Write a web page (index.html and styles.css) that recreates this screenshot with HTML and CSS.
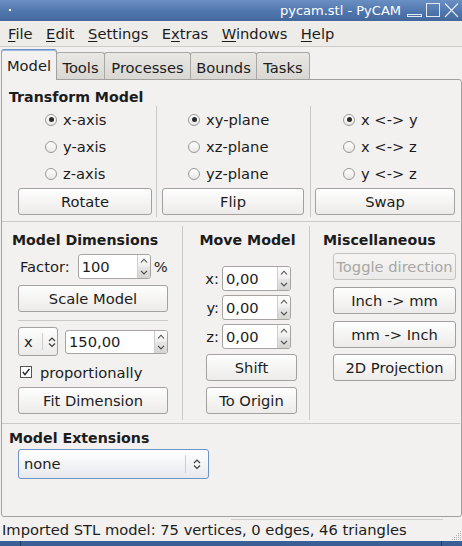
FILE: index.html
```html
<!DOCTYPE html>
<html>
<head>
<meta charset="utf-8">
<title>pycam.stl - PyCAM</title>
<link rel="stylesheet" href="styles.css">
</head>
<body>
<div class="titlebar">
  <span class="app-dot"></span>
  <span class="title">pycam.stl - PyCAM</span>
  <svg class="wbtns" width="56" height="21" viewBox="0 0 56 21">
    <rect x="1.5" y="14.5" width="14" height="2" fill="none" stroke="#e3e9f2"/>
    <rect x="20.5" y="3.5" width="13" height="13" fill="none" stroke="#e3e9f2"/>
    <path d="M39 3.5 L52 17 M52 3.5 L39 17" stroke="#e3e9f2" stroke-width="1.1" fill="none"/>
  </svg>
</div>
<div class="menubar">
  <span class="menu"><u>F</u>ile</span>
  <span class="menu"><u>E</u>dit</span>
  <span class="menu"><u>S</u>ettings</span>
  <span class="menu">E<u>x</u>tras</span>
  <span class="menu"><u>W</u>indows</span>
  <span class="menu"><u>H</u>elp</span>
</div>
<div class="notebook">
  <div class="tabs">
    <div class="tab active t-model">Model</div>
    <div class="tab t-tools">Tools</div>
    <div class="tab t-proc">Processes</div>
    <div class="tab t-bounds">Bounds</div>
    <div class="tab t-tasks">Tasks</div>
  </div>
  <div class="page">
    <section class="transform">
      <div class="ftitle">Transform Model</div>
      <div class="tgrid">
        <div class="tcol tc1">
          <div class="radios">
            <div class="radio"><span class="rb on"></span>x-axis</div>
            <div class="radio"><span class="rb"></span>y-axis</div>
            <div class="radio"><span class="rb"></span>z-axis</div>
          </div>
          <div class="btn">Rotate</div>
        </div>
        <div class="vsep"></div>
        <div class="tcol tc2">
          <div class="radios">
            <div class="radio"><span class="rb on"></span>xy-plane</div>
            <div class="radio"><span class="rb"></span>xz-plane</div>
            <div class="radio"><span class="rb"></span>yz-plane</div>
          </div>
          <div class="btn">Flip</div>
        </div>
        <div class="vsep"></div>
        <div class="tcol tc3">
          <div class="radios">
            <div class="radio"><span class="rb on"></span>x &lt;-&gt; y</div>
            <div class="radio"><span class="rb"></span>x &lt;-&gt; z</div>
            <div class="radio"><span class="rb"></span>y &lt;-&gt; z</div>
          </div>
          <div class="btn">Swap</div>
        </div>
      </div>
    </section>
    <div class="hsep hsep1"></div>
    <section class="mid">
      <div class="mcol dims">
        <div class="ftitle">Model Dimensions</div>
        <div class="inner">
          <div class="factor-row">
            <span class="lbl">Factor:</span>
            <div class="spin s-factor"><span class="val">100</span><span class="arrows"><span class="up"><svg width="8" height="5" viewBox="0 0 8 5"><path d="M1 4.5 L4 1.2 L7 4.5" fill="none" stroke="#4a4a4a" stroke-width="1.1"/></svg></span><span class="dn"><svg width="8" height="5" viewBox="0 0 8 5"><path d="M1 0.8 L4 4 L7 0.8" fill="none" stroke="#4a4a4a" stroke-width="1.1"/></svg></span></span></div>
            <span class="pct">%</span>
          </div>
          <div class="btn b-scale">Scale Model</div>
          <div class="isep"></div>
          <div class="combo-row">
            <div class="combo c-axis"><span class="cval">x</span><span class="cdiv"></span><svg class="updown" width="8" height="12" viewBox="0 0 8 12"><path d="M1 5 L4 2 L7 5 M1 7.5 L4 10.5 L7 7.5" fill="none" stroke="#3a3a3a" stroke-width="1.1"/></svg></div>
            <div class="spin s-dim"><span class="val">150,00</span><span class="arrows"><span class="up"><svg width="8" height="5" viewBox="0 0 8 5"><path d="M1 4.5 L4 1.2 L7 4.5" fill="none" stroke="#4a4a4a" stroke-width="1.1"/></svg></span><span class="dn"><svg width="8" height="5" viewBox="0 0 8 5"><path d="M1 0.8 L4 4 L7 0.8" fill="none" stroke="#4a4a4a" stroke-width="1.1"/></svg></span></span></div>
          </div>
          <div class="check-row"><span class="cb"><svg width="10" height="10" viewBox="0 0 10 10"><path d="M1.8 5 L4 7.6 L8.4 1.8" fill="none" stroke="#222" stroke-width="1.4"/></svg></span>proportionally</div>
          <div class="btn b-fit">Fit Dimension</div>
        </div>
      </div>
      <div class="vsep mvsep"></div>
      <div class="mcol move">
        <div class="ftitle centered">Move Model</div>
        <div class="move-spins">
          <span class="mlbl">x:</span>
          <div class="spin s-move"><span class="val">0,00</span><span class="arrows"><span class="up"><svg width="8" height="5" viewBox="0 0 8 5"><path d="M1 4.5 L4 1.2 L7 4.5" fill="none" stroke="#4a4a4a" stroke-width="1.1"/></svg></span><span class="dn"><svg width="8" height="5" viewBox="0 0 8 5"><path d="M1 0.8 L4 4 L7 0.8" fill="none" stroke="#4a4a4a" stroke-width="1.1"/></svg></span></span></div>
          <span class="mlbl">y:</span>
          <div class="spin s-move"><span class="val">0,00</span><span class="arrows"><span class="up"><svg width="8" height="5" viewBox="0 0 8 5"><path d="M1 4.5 L4 1.2 L7 4.5" fill="none" stroke="#4a4a4a" stroke-width="1.1"/></svg></span><span class="dn"><svg width="8" height="5" viewBox="0 0 8 5"><path d="M1 0.8 L4 4 L7 0.8" fill="none" stroke="#4a4a4a" stroke-width="1.1"/></svg></span></span></div>
          <span class="mlbl">z:</span>
          <div class="spin s-move"><span class="val">0,00</span><span class="arrows"><span class="up"><svg width="8" height="5" viewBox="0 0 8 5"><path d="M1 4.5 L4 1.2 L7 4.5" fill="none" stroke="#4a4a4a" stroke-width="1.1"/></svg></span><span class="dn"><svg width="8" height="5" viewBox="0 0 8 5"><path d="M1 0.8 L4 4 L7 0.8" fill="none" stroke="#4a4a4a" stroke-width="1.1"/></svg></span></span></div>
        </div>
        <div class="btn b-shift">Shift</div>
        <div class="btn b-origin">To Origin</div>
      </div>
      <div class="vsep mvsep"></div>
      <div class="mcol misc">
        <div class="ftitle">Miscellaneous</div>
        <div class="btn mbtn disabled b-toggle">Toggle direction</div>
        <div class="btn mbtn b-inch">Inch -&gt; mm</div>
        <div class="btn mbtn b-mm">mm -&gt; Inch</div>
        <div class="btn mbtn b-2d">2D Projection</div>
      </div>
    </section>
    <div class="hsep hsep2"></div>
    <section class="ext">
      <div class="ftitle">Model Extensions</div>
      <div class="combo c-ext"><span class="cval">none</span><span class="cdiv"></span><svg class="updown" width="8" height="12" viewBox="0 0 8 12"><path d="M1 5 L4 2 L7 5 M1 7.5 L4 10.5 L7 7.5" fill="none" stroke="#3a3a3a" stroke-width="1.1"/></svg></div>
    </section>
  </div>
</div>
<div class="statusbar">
  <span class="stext">Imported STL model: 75 vertices, 0 edges, 46 triangles</span>
  <svg class="grip" width="12" height="12" viewBox="0 0 12 12">
    <g fill="#b4b2ae">
      <rect x="10" y="2" width="1" height="1"/>
      <rect x="8" y="4" width="1" height="1"/><rect x="10" y="4" width="1" height="1"/>
      <rect x="6" y="6" width="1" height="1"/><rect x="8" y="6" width="1" height="1"/><rect x="10" y="6" width="1" height="1"/>
      <rect x="4" y="8" width="1" height="1"/><rect x="6" y="8" width="1" height="1"/><rect x="8" y="8" width="1" height="1"/><rect x="10" y="8" width="1" height="1"/>
      <rect x="2" y="10" width="1" height="1"/><rect x="4" y="10" width="1" height="1"/><rect x="6" y="10" width="1" height="1"/><rect x="8" y="10" width="1" height="1"/><rect x="10" y="10" width="1" height="1"/>
    </g>
  </svg>
</div>
<div class="strip"></div>
</body>
</html>
```

FILE: styles.css
```css
* { box-sizing: border-box; }
html, body { margin: 0; padding: 0; }
body {
  width: 462px;
  height: 546px;
  overflow: hidden;
  background: #f2f1f0;
  font-family: "DejaVu Sans", "Noto Sans", sans-serif;
  font-size: 14.7px;
  line-height: 17px;
  color: #1c1c1c;
}

/* title bar */
.titlebar {
  height: 21px;
  display: flex;
  align-items: center;
  background: linear-gradient(#6a8fc3, #5077ad 55%, #42679d);
  color: #fff;
  font-size: 13px;
}
.app-dot { width: 2px; height: 2px; background: #fff; margin-left: 9px; margin-top: -1px; }
.title { margin-left: auto; margin-right: 5px; }
.wbtns { display: block; }

/* menu bar */
.menubar {
  height: 26px;
  display: flex;
  align-items: center;
  gap: 13.5px;
  padding-left: 8px;
  padding-bottom: 1px;
  background: #edece9;
  border-bottom: 1px solid #cfcdc9;
}
.menu u { text-decoration-thickness: 1px; text-underline-offset: 2px; }

/* notebook */
.notebook { margin-top: 2px; }
.tabs {
  display: flex;
  align-items: flex-end;
  height: 31px;
  margin-bottom: -1px;
  padding-left: 1px;
}
.tab {
  height: 27px;
  margin-bottom: 1px;
  margin-right: -1px;
  display: flex;
  align-items: center;
  justify-content: center;
  padding-top: 2px;
  border: 1px solid #a9a7a3;
  border-bottom: none;
  border-radius: 3px 3px 0 0;
  background: linear-gradient(#e9e8e5, #d9d7d3);
  position: relative;
}
.tab.active {
  height: 31px;
  margin-bottom: 0;
  padding-top: 1px;
  background: #f2f1f0;
  border-color: #a3a19d;
  border-top: 1px solid #6b90c6;
  box-shadow: inset 0 1px 0 #9fbbe2;
  z-index: 1;
}
.t-model { width: 56px; }
.t-tools { width: 49px; }
.t-proc { width: 87px; }
.t-bounds { width: 67px; }
.t-tasks { width: 54px; }

.page {
  margin-left: 1px;
  width: 461px;
  height: 438px;
  border: 1px solid #a3a19d;
  border-radius: 0 3px 3px 3px;
  background: #f2f1f0;
}

.ftitle { font-weight: bold; font-size: 14.2px; height: 17px; line-height: 16px; white-space: nowrap; }

/* transform */
.transform { padding-top: 9px; }
.transform .ftitle { padding-left: 7px; }
.tgrid {
  display: grid;
  grid-template-columns: 154px 1px 153px 1px 149px;
}
.tcol { padding-bottom: 2px; }
.vsep { background: #cbc9c5; }
.radio { display: flex; align-items: center; height: 27px; padding-bottom: 1px; white-space: nowrap; }
.rb {
  width: 12px;
  height: 12px;
  margin-right: 6px;
  margin-top: 1px;
  border: 1px solid #9a9896;
  border-radius: 50%;
  background: linear-gradient(#ffffff, #e8e7e5);
  display: flex;
  align-items: center;
  justify-content: center;
}
.rb.on::after {
  content: "";
  width: 5px;
  height: 5px;
  border-radius: 50%;
  background: #2a2a2a;
}
.tc1 .radios { padding-left: 43px; }
.tc2 .radios { padding-left: 31px; }
.tc3 .radios { padding-left: 32px; }

.btn {
  height: 27px;
  display: flex;
  align-items: center;
  justify-content: center;
  padding-bottom: 1px;
  border: 1px solid #a3a19e;
  border-radius: 3px;
  background: linear-gradient(#fefefe, #ecebe9);
  white-space: nowrap;
}
.tcol .btn { margin-top: 1px; }
.tc1 .btn { margin-left: 16px; width: 134px; }
.tc2 .btn { margin-left: 5px; width: 142px; }
.tc3 .btn { margin-left: 4px; width: 140px; }

.hsep { border-top: 1px solid #cbc9c5; }
.hsep1 { margin-top: 4px; width: 458px; }
.hsep2 { width: 458px; }

/* middle */
.mid {
  display: grid;
  grid-template-columns: 180px 1px 126px 1px 150px;
  padding-bottom: 9px;
}
.mvsep { margin: 4px 0 -6px; }
.mcol { padding-top: 10px; }

.dims .ftitle { padding-left: 10px; }
.dims .inner { margin-left: 16px; width: 150px; }
.factor-row {
  display: flex;
  align-items: center;
  height: 25px;
  margin-top: 5px;
  padding-left: 2px;
}
.factor-row .spin { margin-left: 8px; }
.pct { margin-left: 3px; }

.spin {
  display: flex;
  height: 25px;
  border: 1px solid #a6a4a1;
  border-radius: 3px;
  background: #fff;
  overflow: hidden;
}
.spin .val { flex: 1; padding-left: 3px; padding-bottom: 1px; display: flex; align-items: center; }
.spin .arrows {
  width: 13px;
  display: flex;
  flex-direction: column;
  border-left: 1px solid #d0cecb;
}
.spin .up, .spin .dn { flex: 1; display: flex; align-items: center; justify-content: center; }
.spin .up { background: linear-gradient(#fdfdfd, #efeeec); }
.spin .dn { background: linear-gradient(#e7e6e4, #d6d4d1); }
.spin svg { display: block; }
.s-factor { width: 73px; }
.s-dim { width: 103px; height: 24px; margin-left: 7px; }
.s-move { width: 69px; }

.b-scale { margin-top: 6px; }
.isep { margin-top: 8px; border-top: 1px solid #cbc9c5; }
.combo-row { display: flex; align-items: center; height: 29px; margin-top: 6px; }
.combo {
  display: flex;
  align-items: center;
  border: 1px solid #a3a19e;
  border-radius: 3px;
  background: linear-gradient(#fefefe, #ebeae8);
}
.c-axis { width: 40px; height: 29px; padding-left: 5px; }
.cdiv { width: 1px; align-self: stretch; margin: 5px 0; background: #cfcdca; }
.c-axis .cdiv { margin-left: 9px; margin-right: 5px; }
.updown { display: block; }

.check-row {
  display: flex;
  align-items: center;
  height: 18px;
  margin-top: 7px;
  padding-left: 2px;
}
.cb {
  width: 12px;
  height: 12px;
  margin-right: 8px;
  border: 1px solid #555;
  background: #fff;
  display: flex;
  align-items: center;
  justify-content: center;
}
.cb svg { display: block; }
.b-fit { margin-top: 6px; }

.move .ftitle.centered { text-align: center; padding-left: 3px; }
.move-spins {
  display: grid;
  grid-template-columns: 36px 69px;
  column-gap: 3px;
  row-gap: 4px;
  margin-top: 17px;
  align-items: center;
}
.mlbl { text-align: right; margin-top: -1px; }
.move .btn { margin-left: 23px; width: 91px; }
.b-shift { margin-top: 5px; }
.b-origin { margin-top: 6px; }

.misc .ftitle { padding-left: 13px; }
.mbtn { margin-left: 23px; width: 123px; }
.b-toggle { margin-top: 4px; }
.b-inch { margin-top: 7px; }
.b-mm { margin-top: 7px; }
.b-2d { margin-top: 6px; }
.btn.disabled {
  color: #a8a7a5;
  border-color: #c4c3c0;
  background: linear-gradient(#f6f5f4, #eceae8);
}

/* extensions */
.ext { padding-top: 6px; }
.ext .ftitle { padding-left: 7px; }
.c-ext {
  margin-top: 2px;
  margin-left: 16px;
  width: 191px;
  height: 30px;
  padding-left: 5px;
  border-color: #6d92c8;
  background: linear-gradient(#ffffff, #e7e9ed);
}
.c-ext .cval { flex: 1; padding-bottom: 1px; }
.c-ext .cdiv { margin-right: 7px; }
.c-ext .updown { margin-right: 7px; }

/* status */
.statusbar {
  height: 24px;
  display: flex;
  align-items: center;
  padding-left: 2px;
  background: linear-gradient(to right, transparent 231px, #cfcdc9 231px, #cfcdc9 443px, transparent 443px) no-repeat 0 2px / 100% 1px;
}
.stext { white-space: nowrap; }
.grip { margin-left: auto; align-self: flex-end; display: block; }
.strip {
  height: 5px;
  background: linear-gradient(to right, #3a5f95 20px, #1e3b66 20px, #1e3b66 21px, #3a5f95 21px, #3a5f95 441px, #1e3b66 441px, #1e3b66 442px, #3a5f95 442px);
}
```
